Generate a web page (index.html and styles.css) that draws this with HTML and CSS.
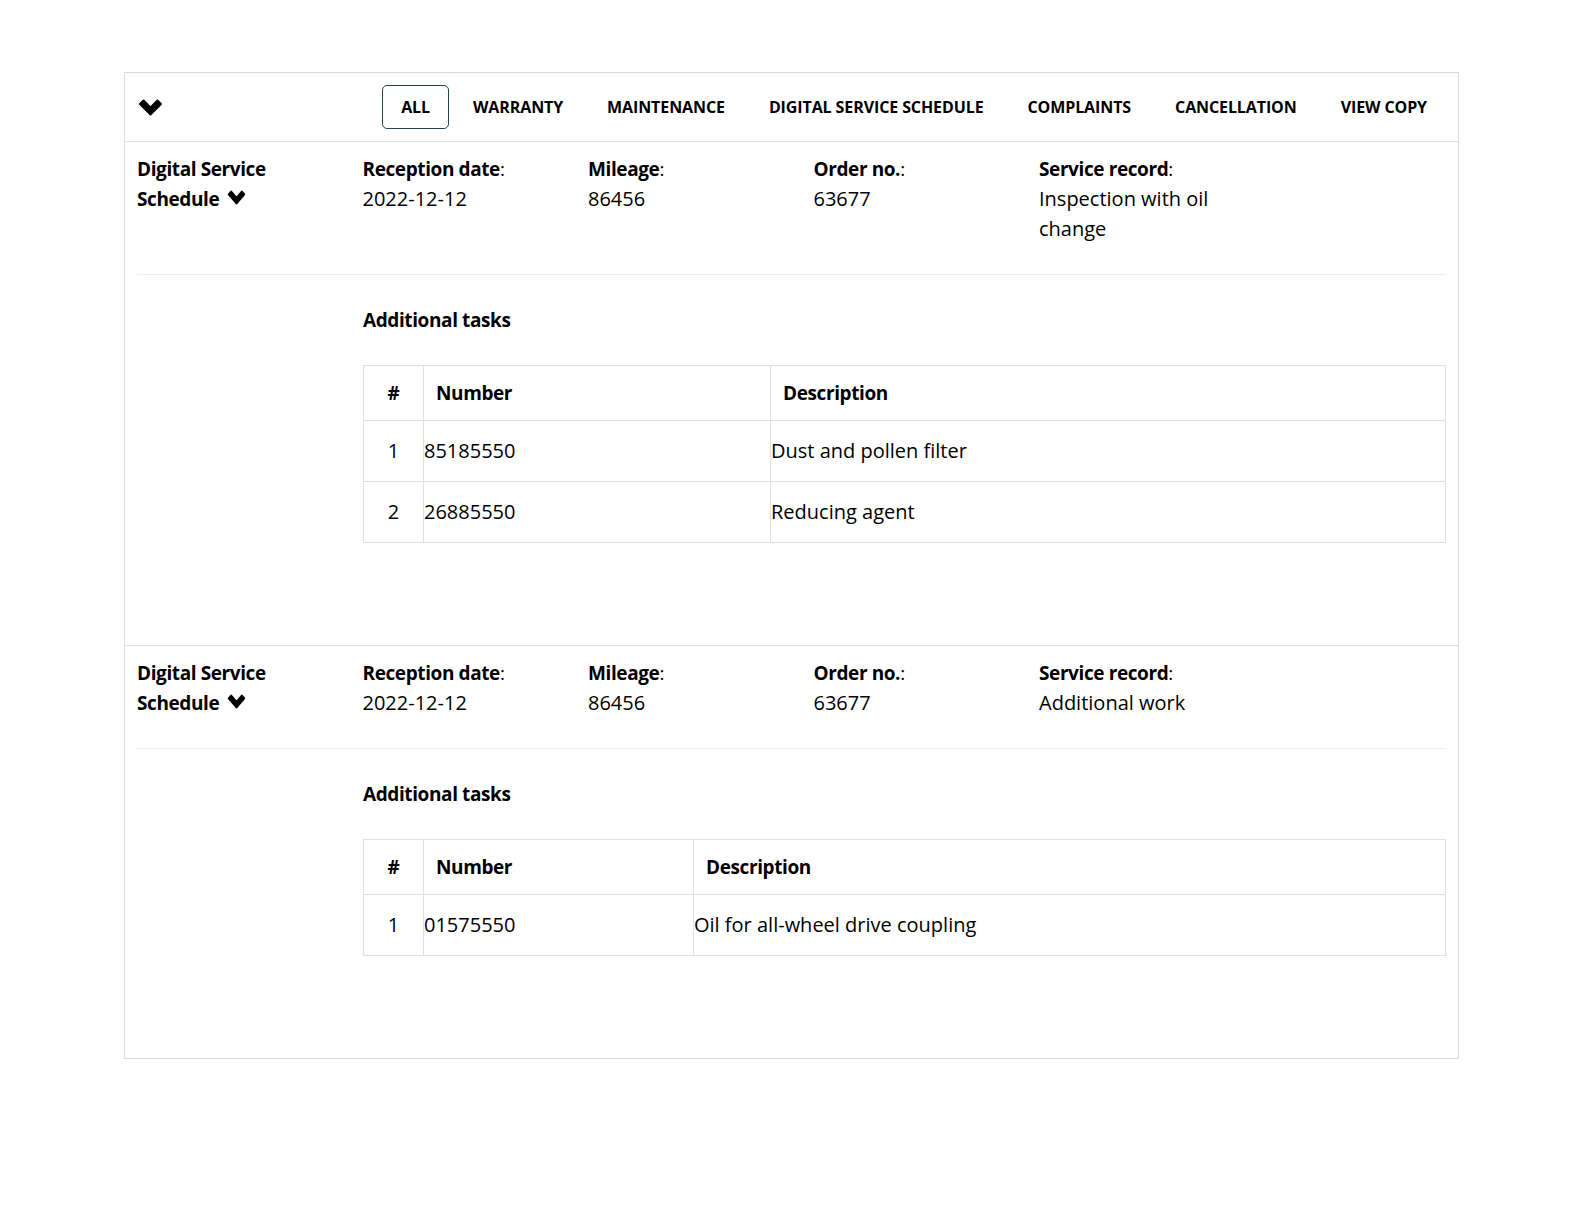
FILE: index.html
```html
<!DOCTYPE html>
<html lang="en">
<head>
<meta charset="utf-8">
<title>Service history</title>
<link rel="stylesheet" href="styles.css">
</head>
<body>
<div class="panel">
  <div class="panel-head">
    <button class="collapse-btn" type="button" aria-label="Collapse">
      <svg class="chev-lg" viewBox="0 0 25 17" aria-hidden="true"><polygon points="2,5 5.5,1.5 12.5,8.5 19.5,1.5 23,5 12.5,15.5"/></svg>
    </button>
    <nav class="tabs">
      <a class="tab tab-active">ALL</a>
      <a class="tab">WARRANTY</a>
      <a class="tab">MAINTENANCE</a>
      <a class="tab">DIGITAL SERVICE SCHEDULE</a>
      <a class="tab">COMPLAINTS</a>
      <a class="tab">CANCELLATION</a>
      <a class="tab">VIEW COPY</a>
    </nav>
  </div>

  <section class="record">
    <div class="summary">
      <div class="field">
        <div class="label">Digital Service Schedule <svg class="chev-sm" viewBox="0 0 25 17" preserveAspectRatio="none" aria-hidden="true"><polygon points="2,5 5.5,1.5 12.5,8.5 19.5,1.5 23,5 12.5,15.5"/></svg></div>
      </div>
      <div class="field">
        <div class="label">Reception date<span class="colon">:</span></div>
        <div class="value">2022-12-12</div>
      </div>
      <div class="field">
        <div class="label">Mileage<span class="colon">:</span></div>
        <div class="value">86456</div>
      </div>
      <div class="field">
        <div class="label">Order no.<span class="colon">:</span></div>
        <div class="value">63677</div>
      </div>
      <div class="field">
        <div class="label">Service record<span class="colon">:</span></div>
        <div class="value">Inspection with oil change</div>
      </div>
    </div>
    <div class="tasks">
      <h3 class="tasks-title">Additional tasks</h3>
      <table class="task-table">
        <colgroup>
          <col class="col-idx">
          <col class="col-num-wide">
          <col>
        </colgroup>
        <thead>
          <tr><th class="c-idx">#</th><th>Number</th><th>Description</th></tr>
        </thead>
        <tbody>
          <tr><td class="c-idx">1</td><td>85185550</td><td>Dust and pollen filter</td></tr>
          <tr><td class="c-idx">2</td><td>26885550</td><td>Reducing agent</td></tr>
        </tbody>
      </table>
    </div>
  </section>

  <section class="record">
    <div class="summary">
      <div class="field">
        <div class="label">Digital Service Schedule <svg class="chev-sm" viewBox="0 0 25 17" preserveAspectRatio="none" aria-hidden="true"><polygon points="2,5 5.5,1.5 12.5,8.5 19.5,1.5 23,5 12.5,15.5"/></svg></div>
      </div>
      <div class="field">
        <div class="label">Reception date<span class="colon">:</span></div>
        <div class="value">2022-12-12</div>
      </div>
      <div class="field">
        <div class="label">Mileage<span class="colon">:</span></div>
        <div class="value">86456</div>
      </div>
      <div class="field">
        <div class="label">Order no.<span class="colon">:</span></div>
        <div class="value">63677</div>
      </div>
      <div class="field">
        <div class="label">Service record<span class="colon">:</span></div>
        <div class="value">Additional work</div>
      </div>
    </div>
    <div class="tasks">
      <h3 class="tasks-title">Additional tasks</h3>
      <table class="task-table">
        <colgroup>
          <col class="col-idx">
          <col class="col-num-narrow">
          <col>
        </colgroup>
        <thead>
          <tr><th class="c-idx">#</th><th>Number</th><th>Description</th></tr>
        </thead>
        <tbody>
          <tr><td class="c-idx">1</td><td>01575550</td><td>Oil for all-wheel drive coupling</td></tr>
        </tbody>
      </table>
    </div>
  </section>
</div>
</body>
</html>
```

FILE: styles.css
```css
* { box-sizing: border-box; }

html, body {
  margin: 0;
  padding: 0;
  background: #ffffff;
}

body {
  font-family: "Open Sans", "Noto Sans", sans-serif;
  color: #000000;
  font-size: 20px;
}

.panel {
  width: 1335px;
  margin: 72px 0 0 124px;
  border: 1px solid #dcdcdc;
}

.panel-head {
  display: flex;
  align-items: center;
  height: 69px;
  padding: 0 11px 0 13px;
  border-bottom: 1px solid #e3e3e3;
}

.collapse-btn {
  display: flex;
  align-items: center;
  padding: 0;
  margin: 0;
  border: 0;
  background: none;
  cursor: pointer;
}

.chev-lg {
  width: 25px;
  height: 17px;
  display: block;
  fill: #000;
  stroke: #000;
  stroke-width: 2;
  stroke-linejoin: round;
}

.tabs {
  display: flex;
  align-items: center;
  gap: 4px;
  margin-left: auto;
}

.tab {
  display: flex;
  align-items: center;
  height: 44px;
  padding: 0 19px;
  border: 1px solid transparent;
  border-radius: 5px;
  font-size: 16px;
  font-weight: 700;
  letter-spacing: -0.1px;
  color: #000;
  cursor: pointer;
  white-space: nowrap;
}

.tab-active {
  border-color: #1f4457;
  padding: 0 18px;
}

.record {
  padding: 0 12px;
}

.record + .record {
  border-top: 1px solid #e0e0e0;
}

.summary {
  display: grid;
  grid-template-columns: repeat(5, 225.5px) 1fr;
  padding: 12px 0 30px;
  border-bottom: 1px solid #efefef;
}

.field {
  padding-right: 12px;
  line-height: 30px;
}

.label {
  font-weight: 700;
  font-size: 19px;
  letter-spacing: -0.4px;
}

.colon {
  font-weight: 400;
  letter-spacing: 0;
}

.chev-sm {
  width: 19px;
  height: 15px;
  margin-left: 3px;
  vertical-align: 1px;
  fill: #000;
  stroke: #000;
  stroke-width: 2;
  stroke-linejoin: round;
}

.value {
  font-size: 20px;
}

.tasks {
  padding: 30px 0 102px 226px;
}

.tasks-title {
  margin: 0 0 30px;
  font-size: 19px;
  line-height: 30px;
  font-weight: 700;
  letter-spacing: -0.4px;
}

.task-table {
  width: 100%;
  table-layout: fixed;
  border-collapse: collapse;
  border: 1px solid #e0e0e0;
}

.col-idx { width: 60px; }
.col-num-wide { width: 347px; }
.col-num-narrow { width: 270px; }

.task-table th,
.task-table td {
  border: 1px solid #e0e0e0;
  text-align: left;
  vertical-align: middle;
}

.task-table th {
  height: 55px;
  padding: 0 12px;
  font-size: 19px;
  font-weight: 700;
  letter-spacing: -0.4px;
}

.task-table td {
  height: 61px;
  padding: 0 0 2px;
  font-size: 20px;
}

.task-table .c-idx {
  text-align: center;
}
```
